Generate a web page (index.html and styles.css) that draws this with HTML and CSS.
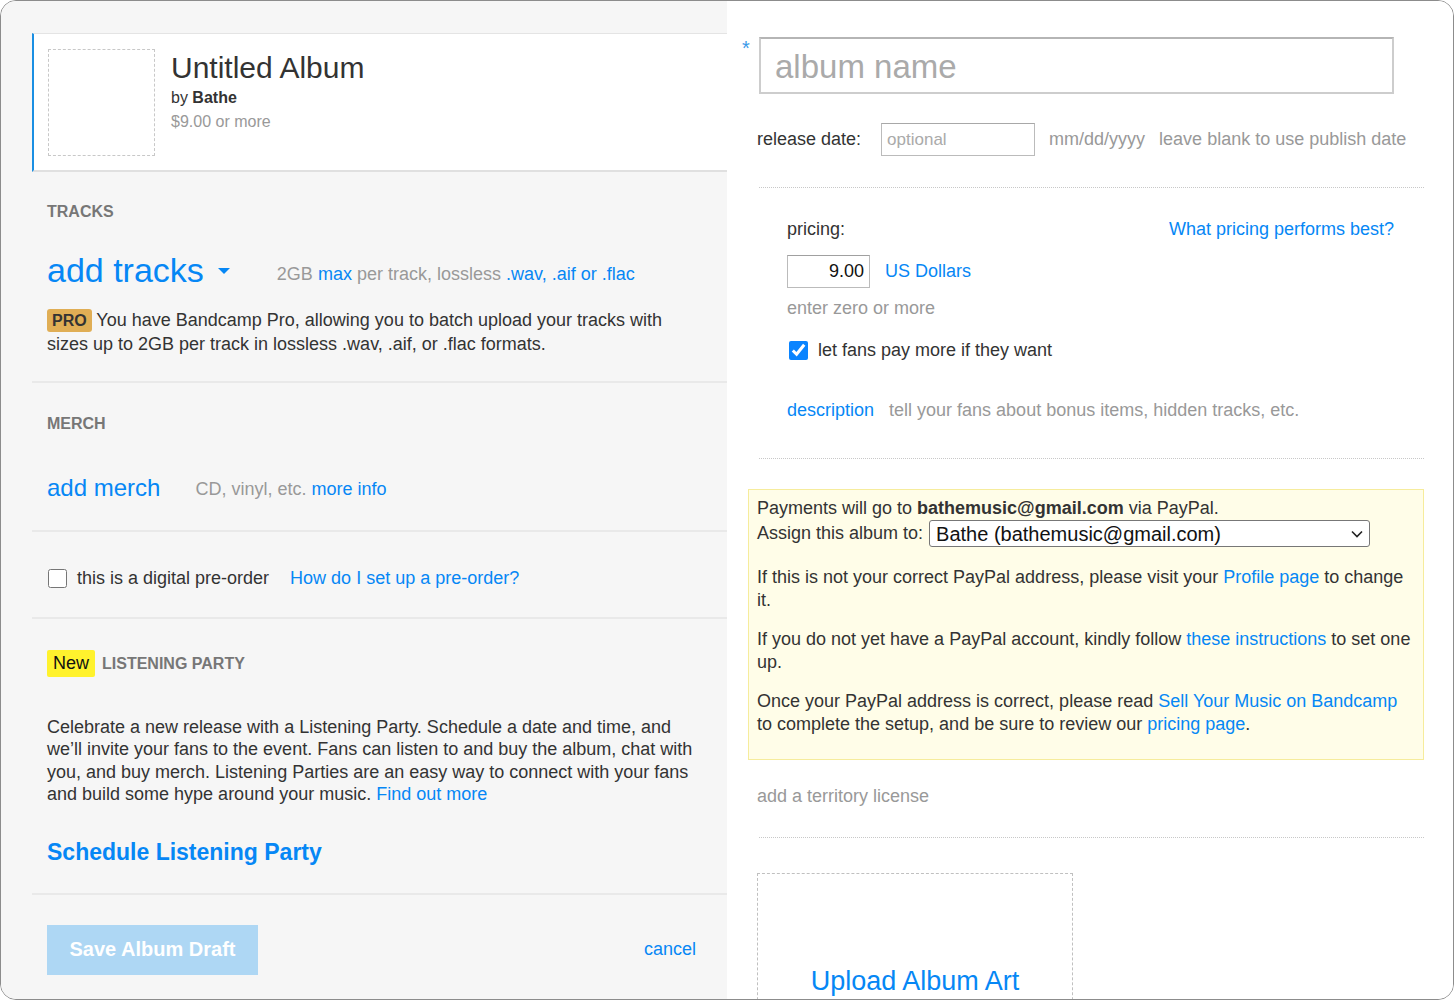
FILE: index.html
```html
<!DOCTYPE html>
<html lang="en">
  <head>
    <meta charset="UTF-8" />
    <title>Untitled Album - Edit</title>
    <link rel="stylesheet" href="styles.css">
  </head>
  <body>
    <div class="frame">
      <div class="left">
        <div class="album-card">
          <div class="art-thumb"></div>
          <div class="album-info">
            <h1>Untitled Album</h1>
            <div class="by">by <b>Bathe</b></div>
            <div class="price">$9.00 or more</div>
          </div>
        </div>

        <section class="section tracks">
          <h3 class="label">TRACKS</h3>
          <div class="add-row">
            <a class="big-link" href="#">add tracks</a>
            <span class="caret"></span>
            <span class="hint">2GB <a href="#">max</a> per track, lossless <a href="#">.wav, .aif or .flac</a></span>
          </div>
          <p class="pro-note"><span class="pro">PRO</span> You have Bandcamp Pro, allowing you to batch upload your tracks with sizes up to 2GB per track in lossless .wav, .aif, or .flac formats.</p>
        </section>

        <section class="section merch">
          <h3 class="label">MERCH</h3>
          <div class="merch-row">
            <a class="merch-link" href="#">add merch</a>
            <span class="hint">CD, vinyl, etc. <a href="#">more info</a></span>
          </div>
        </section>

        <section class="section preorder">
          <label class="check"><input type="checkbox"> this is a digital pre-order</label>
          <a href="#">How do I set up a pre-order?</a>
        </section>

        <section class="section party">
          <div class="party-head"><span class="new">New</span><h3 class="label">LISTENING PARTY</h3></div>
          <p class="party-text">Celebrate a new release with a Listening Party. Schedule a date and time, and we’ll invite your fans to the event. Fans can listen to and buy the album, chat with you, and buy merch. Listening Parties are an easy way to connect with your fans and build some hype around your music. <a href="#">Find out more</a></p>
          <a class="schedule" href="#">Schedule Listening Party</a>
        </section>

        <div class="footer">
          <button class="save" disabled>Save Album Draft</button>
          <a href="#">cancel</a>
        </div>
      </div>

      <div class="right">
        <div class="name-row">
          <span class="req">*</span>
          <input class="album-name" type="text" placeholder="album name">
        </div>

        <div class="date-row">
          <span class="dark">release date:</span>
          <input class="date-input" type="text" placeholder="optional">
          <span class="muted">mm/dd/yyyy</span>
          <span class="muted">leave blank to use publish date</span>
        </div>

        <hr class="dots">

        <div class="pricing">
          <div class="pricing-head">
            <span>pricing:</span>
            <a href="#">What pricing performs best?</a>
          </div>
          <div class="price-row">
            <input class="price-input" type="text" value="9.00">
            <a href="#">US Dollars</a>
          </div>
          <div class="muted zero">enter zero or more</div>
          <label class="check pay-more"><input type="checkbox" checked> let fans pay more if they want</label>
          <div class="desc-row">
            <a href="#">description</a>
            <span class="muted">tell your fans about bonus items, hidden tracks, etc.</span>
          </div>
        </div>

        <hr class="dots">

        <div class="paypal">
          <div>Payments will go to <b>bathemusic@gmail.com</b> via PayPal.</div>
          <div class="assign">Assign this album to:
            <div class="select-wrap">
              <select>
                <option>Bathe (bathemusic@gmail.com)</option>
              </select>
              <svg class="chevron" width="12" height="8" viewBox="0 0 12 8"><path d="M1 1.5l5 5 5-5" fill="none" stroke="#222" stroke-width="1.6"/></svg>
            </div>
          </div>
          <p>If this is not your correct PayPal address, please visit your <a href="#">Profile page</a> to change it.</p>
          <p>If you do not yet have a PayPal account, kindly follow <a href="#">these instructions</a> to set one up.</p>
          <p>Once your PayPal address is correct, please read <a href="#">Sell Your Music on Bandcamp</a> to complete the setup, and be sure to review our <a href="#">pricing page</a>.</p>
        </div>

        <div class="muted territory">add a territory license</div>

        <hr class="dots">

        <div class="upload-art">
          <a href="#">Upload Album Art</a>
        </div>
      </div>
    </div>
  </body>
</html>
```

FILE: styles.css
```css
* {
  box-sizing: border-box;
  margin: 0;
  padding: 0;
}

body {
  background: #fff;
  font-family: "Liberation Sans", Arial, sans-serif;
  font-size: 18px;
  color: #333;
}

a {
  color: #0687f5;
  text-decoration: none;
}

.frame {
  width: 1454px;
  height: 1000px;
  border: 1px solid #8c8c8c;
  border-radius: 16px;
  overflow: hidden;
  display: grid;
  grid-template-columns: 726px 1fr;
}

/* left column */

.left {
  background: #f6f6f6;
  padding: 32px 0 0 31px;
}

.album-card {
  height: 139px;
  background: #fff;
  border-left: 2px solid #1a8fe3;
  border-top: 1px solid #e4e4e4;
  border-bottom: 2px solid #e0e0e0;
  padding: 15px 14px;
  display: flex;
  gap: 16px;
}

.art-thumb {
  width: 107px;
  height: 107px;
  border: 1px dashed #c8c8c8;
}

.album-info h1 {
  font-size: 30px;
  font-weight: normal;
  line-height: 37px;
}

.by,
.price {
  font-size: 16px;
  line-height: 24px;
}

.price {
  color: #999;
}

.section {
  padding-left: 15px;
  border-bottom: 2px solid #e9e9e9;
}

.label {
  font-size: 16px;
  line-height: 20px;
  color: #777;
  font-weight: bold;
}

.hint {
  color: #999;
}

.tracks {
  padding-top: 30px;
  padding-bottom: 25px;
}

.add-row {
  margin-top: 28px;
  height: 40px;
  display: flex;
  align-items: center;
}

.big-link {
  font-size: 34px;
  line-height: 40px;
}

.caret {
  width: 0;
  height: 0;
  border-left: 6px solid transparent;
  border-right: 6px solid transparent;
  border-top: 6px solid #0687f5;
  margin: 2px 47px 0 14px;
}

.add-row .hint {
  margin-top: 8px;
}

.pro-note {
  margin-top: 18px;
  width: 640px;
  line-height: 24px;
}

.pro {
  display: inline-block;
  background: #e0ae55;
  color: #333;
  font-size: 16px;
  font-weight: bold;
  line-height: 23px;
  padding: 0 5px;
  border-radius: 3px;
}

.merch {
  padding-top: 31px;
  padding-bottom: 27px;
}

.merch-row {
  margin-top: 39px;
  display: flex;
  align-items: center;
  gap: 35px;
  height: 30px;
}

.merch-link {
  font-size: 24px;
}

.merch-row .hint {
  margin-top: 3px;
}

.preorder {
  padding-top: 34px;
  padding-bottom: 27px;
  display: flex;
  align-items: center;
  gap: 21px;
  height: 87px;
}

.check {
  display: flex;
  align-items: center;
  gap: 10px;
}

.check input {
  width: 19px;
  height: 19px;
  margin: 0 0 0 1px;
  accent-color: #0a84ff;
}

.party {
  padding-top: 31px;
  padding-bottom: 26px;
}

.party-head {
  display: flex;
  align-items: center;
  gap: 7px;
}

.new {
  background: #fff22d;
  color: #111;
  line-height: 27px;
  padding: 0 6px;
  border-radius: 2px;
}

.party-text {
  margin-top: 39px;
  width: 660px;
  line-height: 22.4px;
}

.schedule {
  display: block;
  margin-top: 31px;
  font-size: 23px;
  font-weight: bold;
  line-height: 30px;
}

.footer {
  padding: 30px 31px 0 15px;
  display: flex;
  justify-content: space-between;
  align-items: center;
}

.save {
  width: 211px;
  height: 50px;
  border: none;
  background: #aed7f4;
  color: #fff;
  font-family: inherit;
  font-size: 20px;
  font-weight: bold;
}

/* right column */

.right {
  background: #fff;
  padding: 0 29px 0 21px;
}

.name-row {
  display: flex;
  margin: 36px 0 0 -6px;
}

.req {
  width: 17px;
  color: #3a9ae8;
  font-size: 20px;
  line-height: 22px;
}

.album-name {
  width: 635px;
  height: 57px;
  border: 2px solid #cdcdcd;
  border-top-color: #b5b5b5;
  padding: 3px 0 0 14px;
  font-family: inherit;
  font-size: 33px;
  outline: none;
}

.album-name::placeholder {
  color: #aaa;
}

.date-row {
  margin-top: 29px;
  padding-left: 9px;
  display: flex;
  align-items: center;
  gap: 14px;
}

.date-row .dark {
  margin-right: 6px;
}

.date-input {
  width: 154px;
  height: 33px;
  border: 1px solid #bbb;
  border-top-color: #a8a8a8;
  padding-left: 5px;
  font-family: inherit;
  font-size: 17px;
}

.date-input::placeholder {
  color: #aaa;
}

.muted {
  color: #999;
}

.dots {
  border: none;
  border-top: 1px dotted #c8c8c8;
  margin: 31px 0 0 11px;
}

.pricing {
  padding: 29px 30px 0 39px;
}

.pricing-head {
  display: flex;
  justify-content: space-between;
  line-height: 24px;
}

.price-row {
  margin-top: 14px;
  display: flex;
  align-items: center;
  gap: 15px;
}

.price-input {
  width: 83px;
  height: 33px;
  border: 1px solid #bbb;
  border-top-color: #a0a0a0;
  text-align: right;
  padding-right: 5px;
  font-family: inherit;
  font-size: 18px;
  color: #111;
}

.zero {
  margin-top: 8px;
  line-height: 24px;
}

.pay-more {
  margin-top: 18px;
  line-height: 24px;
}

.pay-more input {
  margin-left: 2px;
}

.desc-row {
  margin-top: 36px;
  display: flex;
  gap: 15px;
  line-height: 24px;
}

.pricing + .dots {
  margin-top: 36px;
}

.paypal {
  margin-top: 30px;
  background: #fffde8;
  border: 1px solid #f6ec9c;
  padding: 7px 7px 23px 8px;
  line-height: 23px;
}

.assign {
  display: flex;
  align-items: center;
  gap: 6px;
}

.select-wrap {
  position: relative;
}

.assign select {
  appearance: none;
  display: block;
  width: 441px;
  height: 27px;
  border: 1px solid #777;
  border-radius: 3px;
  background: #fff;
  font-family: inherit;
  font-size: 20px;
  color: #111;
  padding-left: 6px;
}

.chevron {
  position: absolute;
  right: 7px;
  top: 10px;
}

.paypal p {
  margin-top: 16px;
}

.assign + p {
  margin-top: 19px;
}

.territory {
  margin-top: 24px;
  padding-left: 9px;
  line-height: 24px;
}

.territory + .dots {
  margin-top: 29px;
}

.upload-art {
  margin: 35px 0 0 9px;
  width: 316px;
  height: 316px;
  border: 1px dashed #c0c0c0;
  padding-top: 92px;
  text-align: center;
  font-size: 27px;
}
```
